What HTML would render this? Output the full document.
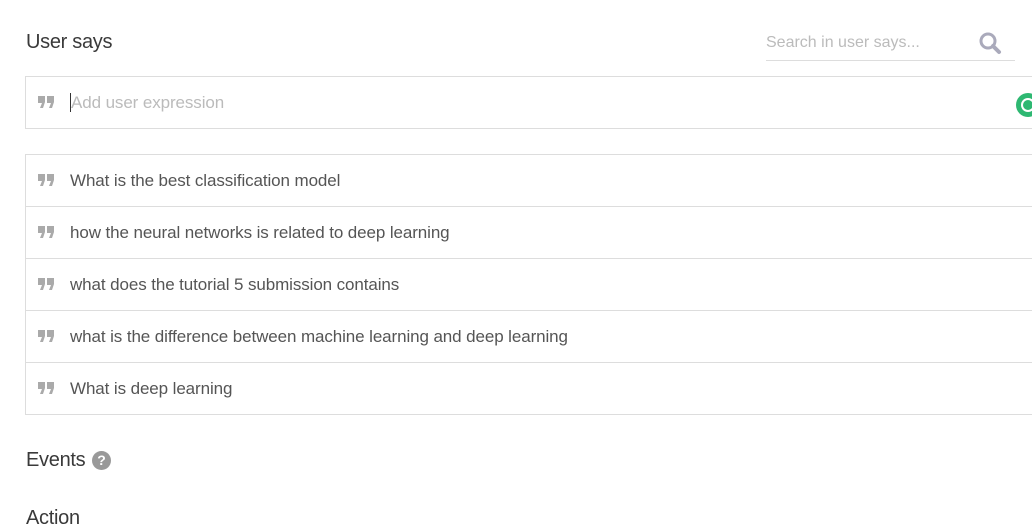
<!DOCTYPE html>
<html><head><style>
body{margin:0;width:1032px;height:520px;overflow:hidden;background:#fff;font-family:"Liberation Sans",sans-serif;position:relative}
.a{position:absolute}
h2{position:absolute;margin:0;font-weight:normal;font-size:20px;color:#3a3a3a;letter-spacing:-0.3px}
.box{position:absolute;left:25px;width:1020px;border:1px solid #ddd;box-sizing:border-box}
.row{height:52px;border-bottom:1px solid #ddd;box-sizing:border-box;position:relative;font-size:17px;color:#555;line-height:51px;padding-left:44px;letter-spacing:-0.1px}
.row:last-child{border-bottom:none}
.q{position:absolute;left:12px;top:19px}
</style></head><body>
<svg width="0" height="0" style="position:absolute"><defs><symbol id="qq" viewBox="0 0 16 12"><path d="M0 0h7v6l-2 6H2l2-5H0z M9 0h7v6l-2 6h-3l2-5H9z" fill="#aaa"/></symbol></defs></svg>
<h2 style="left:26px;top:31px">User says</h2>
<div class="a" style="left:766px;top:34px;font-size:16px;color:#bbb">Search in user says...</div>
<svg class="a" style="left:978px;top:31px" width="24" height="24" viewBox="0 0 24 24"><circle cx="10" cy="10" r="7" fill="none" stroke="#aab" stroke-width="3"/><path d="M15 15l6 6" stroke="#aab" stroke-width="4" stroke-linecap="round"/></svg>
<div class="a" style="left:766px;top:60px;width:249px;height:1px;background:#ddd"></div>
<div class="box" style="top:76px;height:53px"><div class="row" style="color:#bbb;height:51px"><svg class="q" width="16" height="12"><use href="#qq"/></svg><span style="border-left:1px solid #333">Add user expression</span></div></div>
<div class="a" style="left:1016px;top:93px;width:24px;height:24px;border-radius:50%;background:#2eb872"></div>
<div class="a" style="left:1021px;top:98px;width:10px;height:10px;border-radius:50%;border:2px solid #fff"></div>
<div class="box" style="top:154px;height:261px">
<div class="row"><svg class="q" width="16" height="12"><use href="#qq"/></svg>What is the best classification model</div>
<div class="row"><svg class="q" width="16" height="12"><use href="#qq"/></svg>how the neural networks is related to deep learning</div>
<div class="row"><svg class="q" width="16" height="12"><use href="#qq"/></svg>what does the tutorial 5 submission contains</div>
<div class="row"><svg class="q" width="16" height="12"><use href="#qq"/></svg>what is the difference between machine learning and deep learning</div>
<div class="row"><svg class="q" width="16" height="12"><use href="#qq"/></svg>What is deep learning</div>
</div>
<h2 style="left:26px;top:449px">Events</h2>
<div class="a" style="left:92px;top:451px;width:19px;height:19px;border-radius:50%;background:#999;color:#fff;font-weight:bold;font-size:14px;text-align:center;line-height:19px">?</div>
<h2 style="left:26px;top:507px">Action</h2>
</body></html>
